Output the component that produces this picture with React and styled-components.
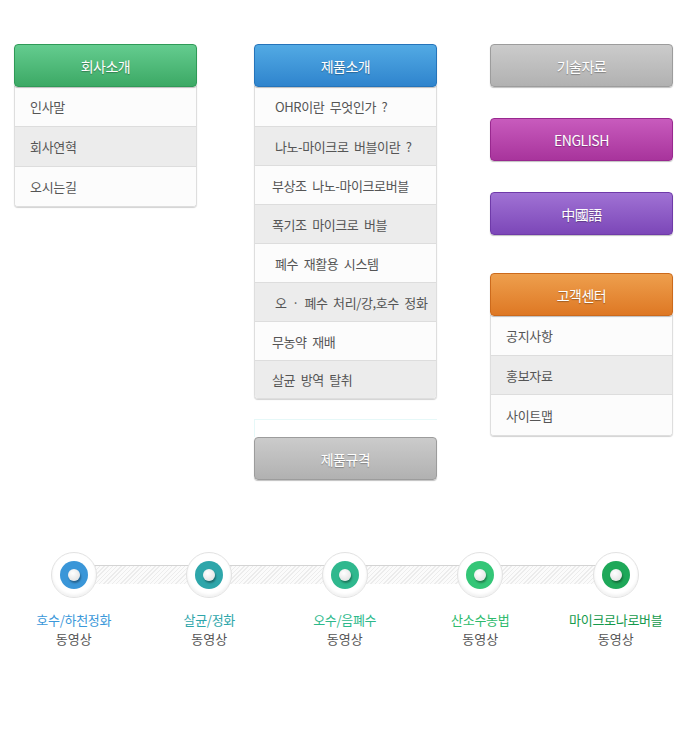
import React from 'react';
import styled, { createGlobalStyle } from 'styled-components';

const GlobalStyle = createGlobalStyle`
  body {
    margin: 0;
    background: #fff;
    font-family: "Noto Sans CJK KR", "Noto Sans", sans-serif;
  }
`;

const colors = {
    green: ['#64cc8f', '#3ca965', '#2f9a57'],
    blue: ['#52aae4', '#2f84cd', '#2574ba'],
    gray: ['#cbcbcb', '#b1b1b1', '#9c9c9c'],
    magenta: ['#c85bbd', '#a8349c', '#99288f'],
    purple: ['#a072d4', '#7c47b8', '#6f3aa9'],
    orange: ['#ee9f4d', '#de7824', '#cc6a1c'],
};

const Page = styled.div`
  width: 689px;
  height: 730px;
  overflow: hidden;
`;

const Menus = styled.div`
  height: 552px;
  box-sizing: border-box;
  display: flex;
  align-items: flex-start;
  padding: 44px 0 0 14px;
`;

const Column = styled.div`
  width: 183px;
  margin-left: ${(p) => p.$offset || 0}px;
  display: flex;
  flex-direction: column;
`;

const Header = styled.div`
  height: 41px;
  border: 1px solid ${(p) => colors[p.$color][2]};
  border-radius: 4px;
  background: linear-gradient(${(p) => colors[p.$color][0]}, ${(p) => colors[p.$color][1]});
  box-shadow: 0 1px 1px rgba(0, 0, 0, 0.25);
  display: flex;
  align-items: center;
  justify-content: center;
  color: #fff;
  font-size: 14px;
  letter-spacing: -0.5px;
  text-shadow: 0 1px 1px rgba(0, 0, 0, 0.3);
  margin-top: ${(p) => p.$gap || 0}px;
  position: relative;
  z-index: 1;
`;

const List = styled.ul`
  list-style: none;
  margin: -1px 0 0;
  padding: 0;
  border: 1px solid #dedede;
  border-top: none;
  border-radius: 0 0 4px 4px;
  box-shadow: 0 1px 1px rgba(0, 0, 0, 0.18);
  overflow: hidden;
`;

const Item = styled.li`
  height: ${(p) => p.$h || 39}px;
  display: flex;
  align-items: center;
  white-space: nowrap;
  padding-left: ${(p) => p.$indent || 15}px;
  background: ${(p) => (p.$alt ? '#ececec' : '#fcfcfc')};
  border-top: 1px solid ${(p) => (p.$first ? 'transparent' : '#dddddd')};
  color: #555;
  font-size: 13px;
  letter-spacing: ${(p) => (p.$wide ? '-0.4px' : '-0.3px')};
  word-spacing: ${(p) => (p.$wide ? '3px' : '0')};
`;

const Faint = styled.div`
  height: 17px;
  margin-top: 20px;
  border-top: 1px solid #e6f8f8;
  border-left: 1px solid #e6f8f8;
`;

const Timeline = styled.div`
  position: relative;
  display: flex;
  margin-left: 6px;
`;

const Track = styled.div`
  position: absolute;
  left: 68px;
  width: 542px;
  top: 13px;
  height: 18px;
  border-top: 1px solid #d4d4d4;
  background: repeating-linear-gradient(135deg, #ececec 0 1px, #fbfbfb 1px 3px);
`;

const Stop = styled.div`
  width: 135.5px;
  display: flex;
  flex-direction: column;
  align-items: center;
  position: relative;
`;

const Ring = styled.div`
  width: 46px;
  height: 46px;
  border-radius: 50%;
  background: #fff;
  border: 1px solid #e2e2e2;
  box-shadow: inset 0 -2px 3px rgba(0, 0, 0, 0.06);
  display: flex;
  align-items: center;
  justify-content: center;
  box-sizing: border-box;
`;

const Dot = styled.div`
  width: 28px;
  height: 28px;
  border-radius: 50%;
  background: ${(p) => p.$color};
  display: flex;
  align-items: center;
  justify-content: center;
  &::after {
    content: '';
    width: 12px;
    height: 12px;
    border-radius: 50%;
    background: radial-gradient(circle at 40% 35%, #ffffff, #dcdcdc);
    box-shadow: 1px 2px 2px rgba(0, 0, 0, 0.35);
  }
`;

const Title = styled.div`
  margin-top: 12px;
  font-size: 13px;
  line-height: 19px;
  letter-spacing: -0.3px;
  color: ${(p) => p.$color};
`;

const Sub = styled.div`
  font-size: 13px;
  line-height: 19px;
  color: #555;
`;

const products = [
    ['OHR이란 무엇인가 ?', 20],
    ['나노-마이크로 버블이란 ?', 20],
    ['부상조 나노-마이크로버블', 17],
    ['폭기조 마이크로 버블', 17],
    ['폐수 재활용 시스템', 20],
    ['오 · 폐수 처리/강,호수 정화', 20],
    ['무농약 재배', 17],
    ['살균 방역 탈취', 17],
];

const steps = [
    ['호수/하천정화', '#3a96d8', '#3b98da'],
    ['살균/정화', '#2ea6aa', '#2ea6aa'],
    ['오수/음폐수', '#2fb88e', '#2db98b'],
    ['산소수농법', '#34c677', '#2dbb6c'],
    ['마이크로나로버블', '#1ea859', '#159a4c'],
];

const App = () => {
    return (
        <>
            <GlobalStyle />
            <Page>
                <Menus>
                    <Column>
                        <Header $color="green">회사소개</Header>
                        <List>
                            <Item $first>인사말</Item>
                            <Item $alt>회사연혁</Item>
                            <Item>오시는길</Item>
                        </List>
                    </Column>

                    <Column $offset={57}>
                        <Header $color="blue">제품소개</Header>
                        <List>
                            {products.map(([label, indent], i) => (
                                <Item
                                    key={label}
                                    $first={i === 0}
                                    $alt={i % 2 === 1}
                                    $indent={indent}
                                    $h={i === 0 ? 39 : i === products.length - 1 ? 37 : 38}
                                    $wide
                                >
                                    {label}
                                </Item>
                            ))}
                        </List>
                        <Faint />
                        <Header $color="gray">제품규격</Header>
                    </Column>

                    <Column $offset={53}>
                        <Header $color="gray">기술자료</Header>
                        <Header $color="magenta" $gap={31}>ENGLISH</Header>
                        <Header $color="purple" $gap={31}>中國語</Header>
                        <Header $color="orange" $gap={38}>고객센터</Header>
                        <List>
                            <Item $first>공지사항</Item>
                            <Item $alt $h={38}>홍보자료</Item>
                            <Item $h={40}>사이트맵</Item>
                        </List>
                    </Column>
                </Menus>

                <Timeline>
                    <Track />
                    {steps.map(([label, dot, text]) => (
                        <Stop key={label}>
                            <Ring>
                                <Dot $color={dot} />
                            </Ring>
                            <Title $color={text}>{label}</Title>
                            <Sub>동영상</Sub>
                        </Stop>
                    ))}
                </Timeline>
            </Page>
        </>
    );
};

export default App;
